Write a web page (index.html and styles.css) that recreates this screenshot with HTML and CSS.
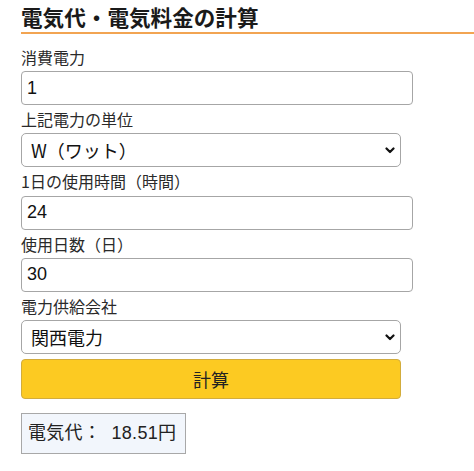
FILE: index.html
```html
<!DOCTYPE html>
<html lang="ja">
<head>
<meta charset="utf-8">
<title>電気代・電気料金の計算</title>
<link rel="stylesheet" href="styles.css">
</head>
<body>
<div class="page">
  <h1 class="title">電気代・電気料金の計算</h1>
  <form class="calc">
    <label class="field-label" for="power">消費電力</label>
    <input class="text-input" id="power" type="text" value="1">
    <label class="field-label" for="unit">上記電力の単位</label>
    <div class="select-wrap">
      <select class="select" id="unit"><option>W（ワット）</option><option>kW（キロワット）</option></select>
      <svg class="chevron" width="10" height="7" viewBox="0 0 10 7"><polyline points="1.5,1.5 5,5 8.5,1.5" fill="none" stroke="#111" stroke-width="2.2" stroke-linecap="round" stroke-linejoin="round"/></svg>
    </div>
    <label class="field-label" for="hours">1日の使用時間（時間）</label>
    <input class="text-input" id="hours" type="text" value="24">
    <label class="field-label" for="days">使用日数（日）</label>
    <input class="text-input" id="days" type="text" value="30">
    <label class="field-label" for="company">電力供給会社</label>
    <div class="select-wrap">
      <select class="select" id="company"><option>関西電力</option><option>東京電力</option></select>
      <svg class="chevron" width="10" height="7" viewBox="0 0 10 7"><polyline points="1.5,1.5 5,5 8.5,1.5" fill="none" stroke="#111" stroke-width="2.2" stroke-linecap="round" stroke-linejoin="round"/></svg>
    </div>
    <button class="calc-btn" type="button">計算</button>
  </form>
  <div class="result">電気代： 18.51円</div>
</div>
</body>
</html>
```

FILE: styles.css
```css
html, body {
  margin: 0;
  padding: 0;
  background: #fff;
}
body {
  font-family: "Noto Sans CJK JP", "Liberation Sans", sans-serif;
  color: #222;
}
.page {
  padding: 3px 0 0 21px;
}
.title {
  margin: 0;
  font-size: 21.6px;
  font-weight: bold;
  line-height: 27px;
  padding-bottom: 2px;
  border-bottom: 2px solid #f2a452;
  color: #1a1a1a;
}
.calc {
  display: flex;
  flex-direction: column;
  width: 380px;
  margin-top: 8.75px;
}
.field-label {
  display: block;
  font-size: 16px;
  line-height: 28.25px;
  color: #2a2a2a;
}
.text-input {
  box-sizing: border-box;
  width: 392px;
  height: 34px;
  margin: 0;
  padding: 0 5px;
  border: 1px solid #a6a6a6;
  border-radius: 4px;
  font-family: "Liberation Sans", "Noto Sans CJK JP", sans-serif;
  font-size: 18px;
  color: #111;
  background: #fff;
  outline: none;
}
.select-wrap {
  position: relative;
  width: 380px;
  height: 34px;
}
.select {
  appearance: none;
  -webkit-appearance: none;
  box-sizing: border-box;
  width: 380px;
  height: 34px;
  margin: 0;
  padding: 0 20px 0 9px;
  border: 1px solid #a6a6a6;
  border-radius: 5px;
  background: #fff;
  font-family: "Noto Sans CJK JP", "Liberation Sans", sans-serif;
  font-size: 18px;
  color: #111;
}
.chevron {
  position: absolute;
  right: 6px;
  top: 14px;
  pointer-events: none;
}
.calc-btn {
  box-sizing: border-box;
  width: 380px;
  height: 40px;
  margin-top: 5px;
  padding: 0;
  border: 1px solid #d2ac3c;
  border-radius: 4px;
  background: #fcca22;
  font-family: "Noto Sans CJK JP", "Liberation Sans", sans-serif;
  font-size: 18px;
  color: #222;
}
.result {
  display: inline-block;
  box-sizing: border-box;
  height: 41px;
  margin-top: 14px;
  padding: 0 9px 0 6px;
  border: 1px solid #a8a8a8;
  background: #f2f6fc;
  font-family: "Liberation Sans", "Noto Sans CJK JP", sans-serif;
  font-size: 18px;
  line-height: 39px;
  color: #222;
  word-spacing: 5px;
  letter-spacing: 0.3px;
}
```
